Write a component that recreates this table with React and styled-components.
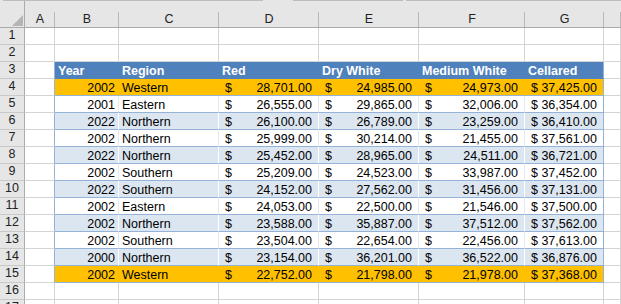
import React from "react";
import styled, { createGlobalStyle } from "styled-components";

const GlobalStyle = createGlobalStyle`
  html, body {
    margin: 0;
    padding: 0;
    background: #fff;
    overflow: hidden;
  }
  body {
    font-family: "Liberation Sans", Arial, sans-serif;
    font-size: 12.5px;
    color: #000;
  }
`;

const COLS = ["A", "B", "C", "D", "E", "F", "G", ""];

const DATA = [
  [2002, "Western", "28,701.00", "24,985.00", "24,973.00", "37,425.00"],
  [2001, "Eastern", "26,555.00", "29,865.00", "32,006.00", "36,354.00"],
  [2022, "Northern", "26,100.00", "26,789.00", "23,259.00", "36,410.00"],
  [2002, "Northern", "25,999.00", "30,214.00", "21,455.00", "37,561.00"],
  [2022, "Northern", "25,452.00", "28,965.00", "24,511.00", "36,721.00"],
  [2002, "Southern", "25,209.00", "24,523.00", "33,987.00", "37,452.00"],
  [2022, "Southern", "24,152.00", "27,562.00", "31,456.00", "37,131.00"],
  [2002, "Eastern", "24,053.00", "22,500.00", "21,546.00", "37,500.00"],
  [2002, "Northern", "23,588.00", "35,887.00", "37,512.00", "37,562.00"],
  [2002, "Southern", "23,504.00", "22,654.00", "22,456.00", "37,613.00"],
  [2000, "Northern", "23,154.00", "36,201.00", "36,522.00", "36,876.00"],
  [2002, "Western", "22,752.00", "21,798.00", "21,978.00", "37,368.00"],
];

const HEADERS = ["Year", "Region", "Red", "Dry White", "Medium White", "Cellared"];

const Sheet = styled.div`
  width: 621px;
  height: 304px;
  overflow: hidden;
  background: #fff;
`;

const TopStrip = styled.div`
  display: flex;
  height: 1px;
  background: #e6e6e6;
`;

const TopSegment = styled.div`
  width: ${(p) => p.$w}px;
  flex: ${(p) => (p.$grow ? 1 : "none")};
  background: ${(p) => (p.$line ? "#bdbdbd" : "transparent")};
`;

const Grid = styled.div`
  display: grid;
  grid-template-columns: 25px 30px 64px 100px 100px 100px 106px 79px 1fr;
  grid-auto-rows: 17px;
  grid-template-rows: 27px;
`;

const Corner = styled.div`
  background: #e6e6e6;
  border-right: 1px solid #ababab;
  border-bottom: 1px solid #ababab;
  display: flex;
  align-items: flex-end;
  justify-content: flex-end;
  padding: 0 1px 1px 0;
`;

const ColHead = styled.div`
  background: linear-gradient(#b9b9b9, #b9b9b9) right bottom / 1px 15px no-repeat,
    #e6e6e6;
  border-bottom: 1px solid #ababab;
  display: flex;
  align-items: flex-end;
  justify-content: center;
  line-height: 14px;
  padding-bottom: 1px;
  color: #222;
`;

const RowHead = styled.div`
  background: #e6e6e6;
  border-right: 1px solid #ababab;
  border-bottom: 1px solid #c9c9c9;
  display: flex;
  align-items: flex-end;
  justify-content: center;
  line-height: 14px;
  padding-bottom: 2px;
  color: #222;
`;

const Cell = styled.div`
  box-sizing: border-box;
  border-right: 1px solid ${(p) => p.$vr || "#d4d4d4"};
  border-bottom: 1px solid ${(p) => p.$hb || "#d4d4d4"};
  background: ${(p) => p.$bg || "#fff"};
  display: flex;
  align-items: flex-end;
  justify-content: ${(p) =>
    p.$money ? "space-between" : p.$right ? "flex-end" : "flex-start"};
  padding: ${(p) => (p.$money ? "0 6px 0 6px" : "0 3px")};
  line-height: 14px;
  white-space: nowrap;
  overflow: hidden;
  color: ${(p) => p.$color || "#000"};
  font-weight: ${(p) => (p.$bold ? 700 : 400)};
`;

const BLUE = "#4f81bd";
const BAND = "#dce6f1";
const ORANGE = "#ffc000";
const TBORDER = "#95b3d7";

function rowStyle(i) {
  if (i === 0 || i === 11) return { bg: ORANGE, vr: ORANGE };
  if (i % 2 === 0) return { bg: BAND, vr: "#fff" };
  return { bg: "#fff", vr: "#e3e9f2" };
}

function SelectAll() {
  return (
    <svg width="11" height="11" viewBox="0 0 11 11">
      <polygon points="11,0 11,11 0,11" fill="#b5b5b5" />
    </svg>
  );
}

export default function App() {
  const rows = [];
  for (let r = 1; r <= 17; r++) {
    const cells = [<RowHead key="h">{r}</RowHead>];
    const inTable = r >= 3 && r <= 15;
    // column A
    cells.push(<Cell key="A" $vr={inTable ? TBORDER : undefined} />);
    if (r === 3) {
      HEADERS.forEach((h, i) => (
        cells.push(
          <Cell key={h} $bg={BLUE} $vr={i === 5 ? TBORDER : BLUE} $hb={BLUE} $color="#fff" $bold>
            {h}
          </Cell>
        )
      ));
    } else if (r >= 4 && r <= 15) {
      const i = r - 4;
      const d = DATA[i];
      const s = rowStyle(i);
      const vr = (k) => (k === 5 ? TBORDER : s.vr);
      cells.push(
        <Cell key="B" $bg={s.bg} $vr={vr(0)} $hb={TBORDER} $right>{d[0]}</Cell>,
        <Cell key="C" $bg={s.bg} $vr={vr(1)} $hb={TBORDER}>{d[1]}</Cell>
      );
      [2, 3, 4, 5].forEach((k) =>
        cells.push(
          <Cell key={k} $bg={s.bg} $vr={vr(k)} $hb={TBORDER} $money>
            <span>$</span>
            <span>{d[k]}</span>
          </Cell>
        )
      );
    } else {
      ["B", "C", "D", "E", "F", "G"].forEach((c) => cells.push(<Cell key={c} />));
    }
    cells.push(<Cell key="H" />);
    rows.push(<React.Fragment key={r}>{cells}</React.Fragment>);
  }

  return (
    <Sheet>
      <GlobalStyle />
      <TopStrip>
        <TopSegment $w={3} />
        <TopSegment $w={260} $line />
        <TopSegment $w={30} />
        <TopSegment $w={110} $line />
        <TopSegment $w={3} />
        <TopSegment $grow $line />
      </TopStrip>
      <Grid>
        <Corner>
          <SelectAll />
        </Corner>
        {COLS.map((c, i) => (
          <ColHead key={i}>{c}</ColHead>
        ))}
        {rows}
      </Grid>
    </Sheet>
  );
}
